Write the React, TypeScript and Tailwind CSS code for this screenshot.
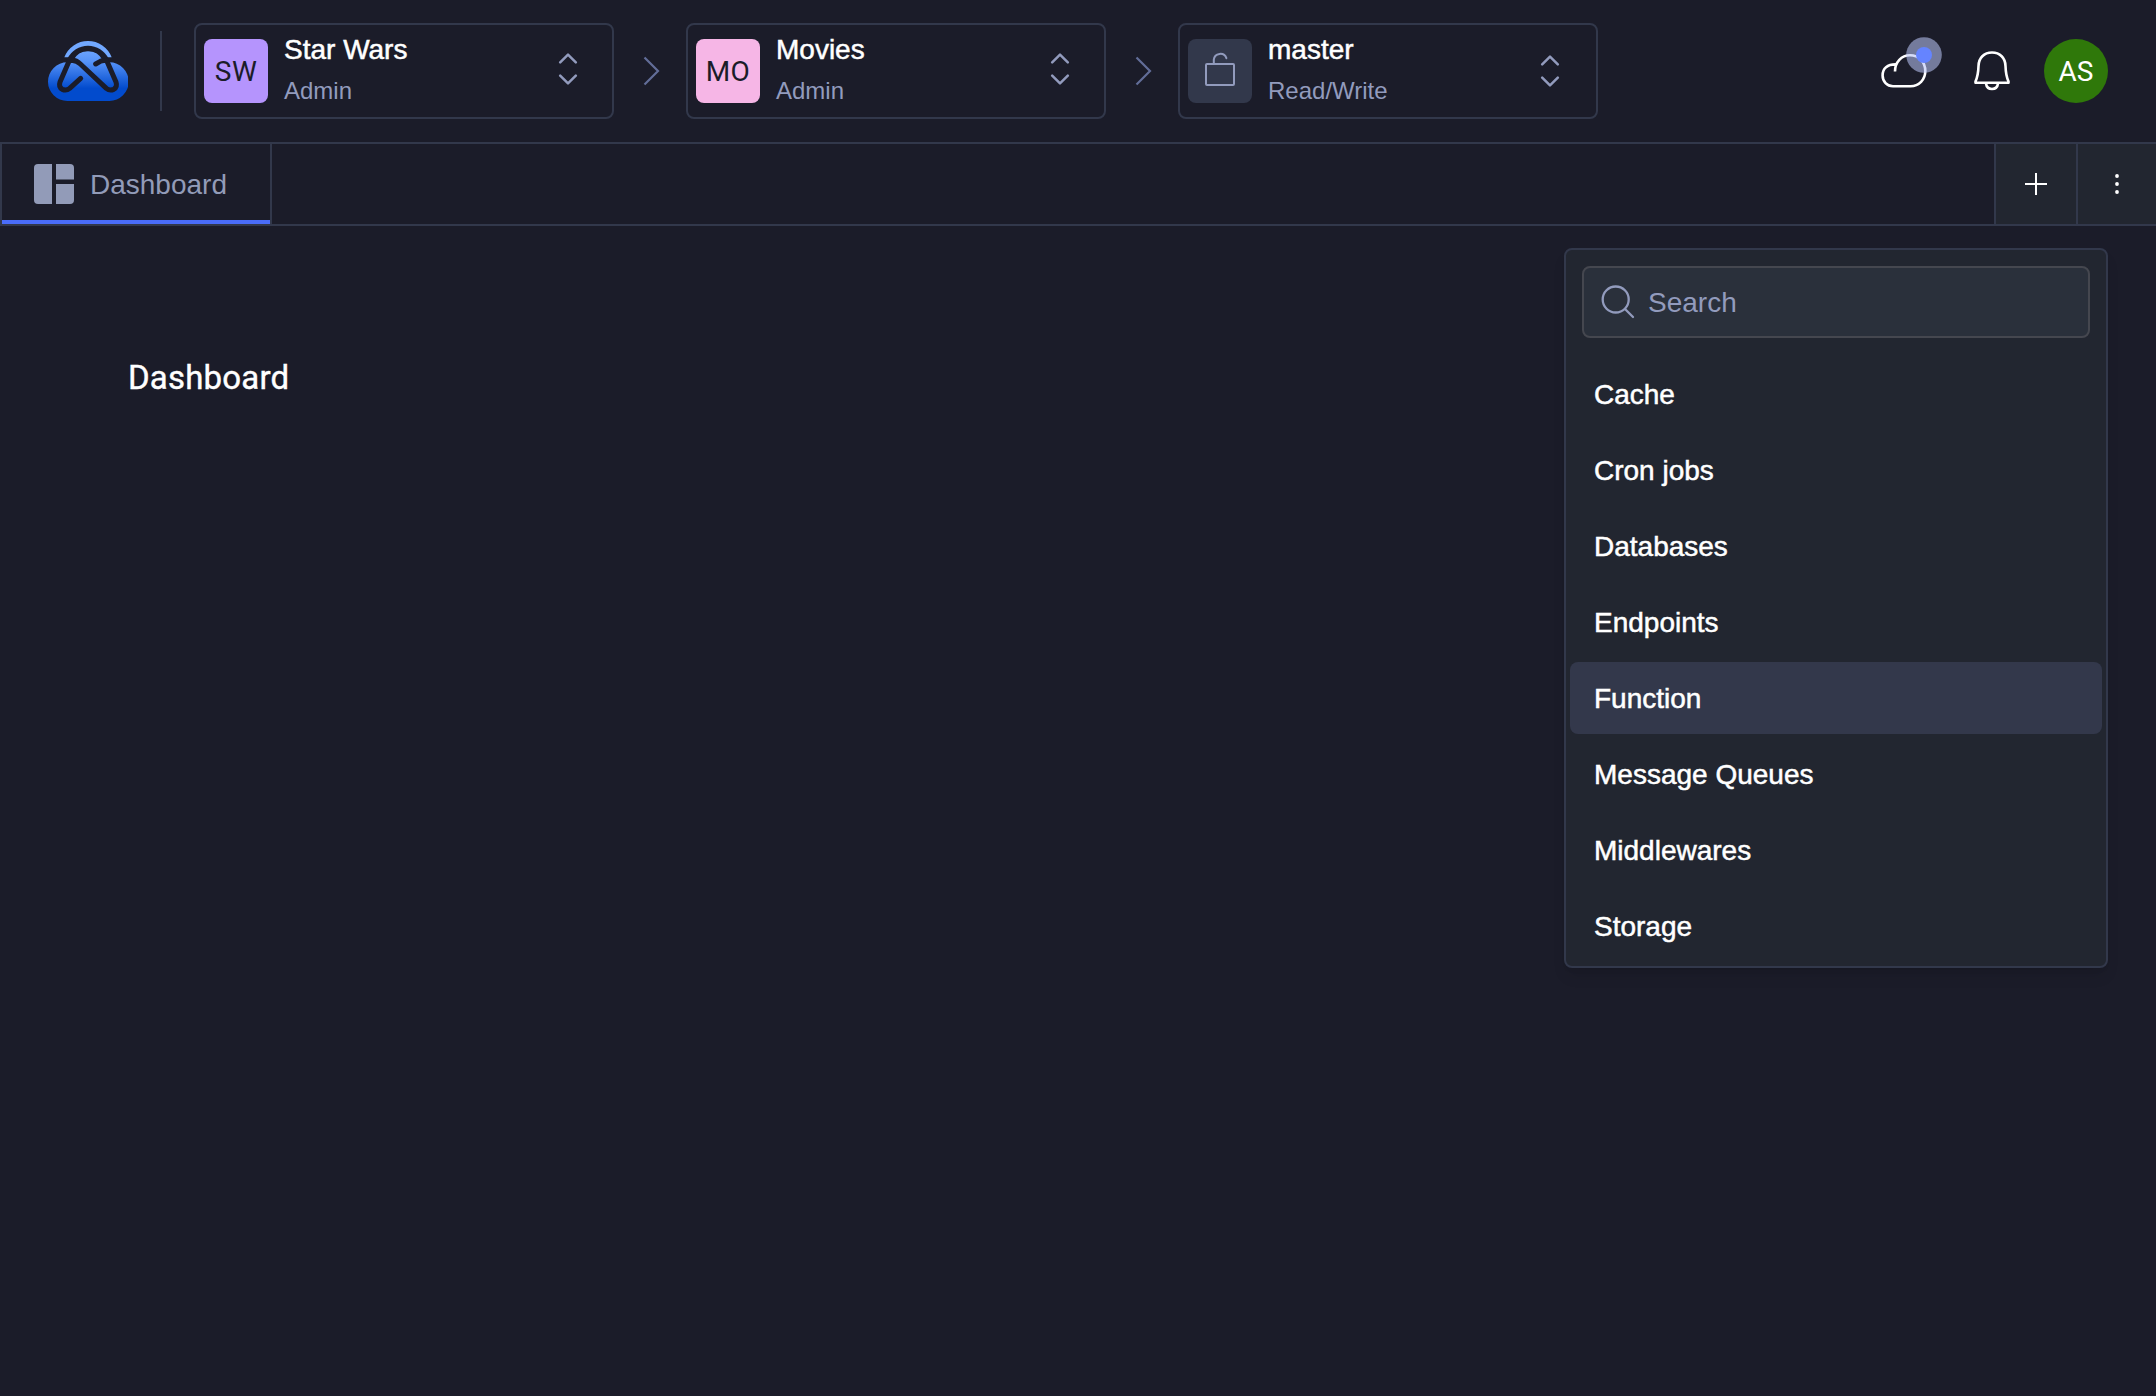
import React from "react";

const Logo = () => (
  <svg viewBox="54 48 240 180" className="-mt-px h-[60px] w-20 shrink-0" fill="none">
    <defs>
      <linearGradient id="cloud" x1="0" y1="62" x2="0" y2="190" gradientUnits="userSpaceOnUse">
        <stop offset="0" stopColor="#77acff" />
        <stop offset="0.38" stopColor="#5592f8" />
        <stop offset="1" stopColor="#024bcd" />
      </linearGradient>
    </defs>
    <path d="M103 97A76 76 0 0 1 245 97H228A62 62 0 0 0 120 97Z" fill="#71a8ff" />
    <path
      d="M130 106A49 49 0 0 1 218 106L222 112H238A58 58 0 0 1 238 228H112A58 58 0 0 1 112 112H126Z"
      fill="url(#cloud)"
    />
    <g stroke="#1b1c29" strokeWidth="15" strokeLinecap="round" strokeLinejoin="round">
      <path d="M152 160L119 190Q109 198 97 193Q85 186 90 171L119 104A61 61 0 0 1 229 104L258 171Q263 186 251 193Q239 198 229 190L151 117Q136 103 121 107" />
      <path d="M197 117L211 109Q219 105 228 107" />
    </g>
  </svg>
);

const Chevron = () => (
  <svg viewBox="0 0 18 30" className="h-[30px] w-[18px] shrink-0" fill="none" stroke="#626d98" strokeWidth="2.200">
    <path d="M1.500 1.500L15 15L1.500 28.500" />
  </svg>
);

const UpDown = ({ shift }: { shift?: boolean }) => (
  <svg
    viewBox="0 0 20 32"
    className={shift ? "mr-9 h-8 w-5 shrink-0" : "-mt-1 mr-[34px] h-8 w-5 shrink-0"}
    fill="none"
    stroke="#929bbd"
    strokeWidth="2.500"
    strokeLinecap="round"
    strokeLinejoin="round"
  >
    <path d="M2.200 9.300L10 1.600L17.800 9.300M2.200 22.700L10 30.400L17.800 22.700" />
  </svg>
);

const Picker = ({
  badge,
  badgeClass,
  title,
  role,
  shift,
}: {
  badge: React.ReactNode;
  badgeClass: string;
  title: string;
  role: string;
  shift?: boolean;
}) => (
  <button className="flex h-24 w-[420px] shrink-0 items-center rounded-lg border-2 border-[#32384b] pl-2 text-left">
    <span
      className={
        "flex size-16 shrink-0 items-center justify-center rounded-lg font-['Roboto',sans-serif] text-[28px] tracking-[0.5px] text-[#1b1c29] " +
        badgeClass
      }
    >
      {badge}
    </span>
    <span className="ml-4 flex flex-1 flex-col">
      <span className="-mt-px mb-px text-[28px] leading-10 text-white [-webkit-text-stroke:0.5px_white]">{title}</span>
      <span className="text-2xl leading-10 text-[#929bbd]">{role}</span>
    </span>
    <UpDown shift={shift} />
  </button>
);

const LockIcon = () => (
  <svg viewBox="0 0 32 36" className="mb-1 h-9 w-8" fill="none" stroke="#929bbd" strokeWidth="2" strokeLinejoin="round">
    <rect x="2" y="13" width="28" height="21" rx="1" />
    <path d="M9.800 13V8.700A6.500 6.500 0 0 1 22.400 7.200" strokeLinecap="round" />
  </svg>
);

const CloudIcon = () => (
  <svg viewBox="1880 36 62 54" className="h-[54px] w-[62px]" fill="none">
    <path
      d="M1895 71.500C1895 62 1901.500 55.300 1910 55.300C1919 55.300 1925.300 62.500 1925.300 71C1925.300 79.500 1919 86.200 1910.500 86.200H1893C1887 86.200 1882.600 81.500 1882.600 75.500C1882.600 68.500 1887.500 64.400 1895.500 64.400"
      stroke="white"
      strokeWidth="2.600"
    />
    <circle cx="1924" cy="55" r="17.800" fill="#b9c4f5" fillOpacity="0.57" />
    <circle cx="1924" cy="55" r="8" fill="#6584ff" />
  </svg>
);

const BellIcon = () => (
  <svg viewBox="1973 50 38 42" className="h-[42px] w-[38px]" fill="none" stroke="white" strokeWidth="2.600" strokeLinejoin="round">
    <path d="M1992 52.500C1984 52.500 1978.700 58 1978.500 66C1978.300 73 1977.500 77 1975.500 81.500V82.700H2008.500V81.500C2006.500 77 2005.700 73 2005.500 66C2005.300 58 2000 52.500 1992 52.500Z" />
    <path d="M1986 83.500C1986.500 87 1988.800 89 1992 89C1995.200 89 1997.500 87 1998 83.500" />
  </svg>
);

const items = ["Cache", "Cron jobs", "Databases", "Endpoints", "Function", "Message Queues", "Middlewares", "Storage"];

export default function App() {
  return (
    <div className="relative flex h-[1396px] w-[2156px] flex-col overflow-hidden bg-[#1b1c29] font-['Liberation_Sans',Arial,sans-serif]">
      <header className="flex h-[142px] shrink-0 items-center pl-12 pr-12">
        <Logo />
        <div className="ml-8 mr-8 h-20 w-0.5 bg-[#32384b]" />
        <Picker badge={<span className="pt-0.5">SW</span>} badgeClass="bg-[#b594fd]" title="Star Wars" role="Admin" />
        <div className="flex w-[72px] items-center justify-center pl-1">
          <Chevron />
        </div>
        <Picker badge={<span className="pt-0.5">MO</span>} badgeClass="bg-[#f6b6e6]" title="Movies" role="Admin" />
        <div className="flex w-[72px] items-center justify-center pl-1">
          <Chevron />
        </div>
        <Picker badge={<LockIcon />} badgeClass="bg-[#32384b]" title="master" role="Read/Write" shift />
        <div className="ml-auto flex items-center">
          <div className="mr-[31px] -mt-4">
            <CloudIcon />
          </div>
          <div className="mr-[33px]">
            <BellIcon />
          </div>
          <div className="flex size-16 items-center justify-center rounded-full bg-[#2f780a] pt-px font-['Roboto',sans-serif] text-[28px] text-white">
            AS
          </div>
        </div>
      </header>

      <nav className="flex h-[84px] shrink-0 border-y-2 border-[#32384b]">
        <div className="flex w-[272px] items-center border-x-2 border-[#32384b]">
          <div className="flex h-full w-full items-center border-b-4 border-[#4a6cf9] pl-8 pt-1">
            <svg viewBox="0 0 40 40" className="size-10" fill="#929bb8">
              <path d="M4 0H18V40H4A4 4 0 0 1 0 36V4A4 4 0 0 1 4 0Z" />
              <path d="M22 0H36A4 4 0 0 1 40 4V15.500H22Z" />
              <path d="M22 20H40V36A4 4 0 0 1 36 40H22Z" />
            </svg>
            <span className="ml-4 pt-0.5 text-[28px] leading-10 text-[#929bb8]">Dashboard</span>
          </div>
        </div>
        <button className="ml-auto flex w-[82px] items-center justify-center border-l-2 border-[#32384b] bg-[#222630]">
          <svg viewBox="0 0 22 22" className="size-[22px]" stroke="white" strokeWidth="2">
            <path d="M11 0V22M0 11H22" />
          </svg>
        </button>
        <button className="flex w-20 items-center justify-center border-l-2 border-[#32384b] bg-[#222630]">
          <svg viewBox="0 0 4 20" className="h-5 w-1" fill="white">
            <circle cx="2" cy="2" r="1.900" />
            <circle cx="2" cy="10" r="1.900" />
            <circle cx="2" cy="18" r="1.900" />
          </svg>
        </button>
      </nav>

      <main className="pl-32 pt-[132px]">
        <h1 className="font-['Roboto',sans-serif] text-[33px] leading-10 tracking-[0.2px] text-white [-webkit-text-stroke:0.4px_white]">
          Dashboard
        </h1>
      </main>

      <div className="absolute right-12 top-[248px] h-[720px] w-[544px] rounded-lg border-2 border-[#32384b] bg-[#222630] px-1 pt-4 shadow-lg">
        <div className="mx-3 flex h-[72px] items-center rounded-lg border-2 border-[#45474f] bg-[#2a303b] pl-[17px]">
          <svg viewBox="0 0 34 34" className="size-[34px]" fill="none" stroke="#929bbd" strokeWidth="2.300" strokeLinecap="round">
            <circle cx="14.700" cy="14.500" r="13" />
            <path d="M24 24L32 32" />
          </svg>
          <span className="ml-[13px] pt-0.5 text-[28px] leading-10 text-[#929bbd]">Search</span>
        </div>
        <ul className="mt-5 flex flex-col gap-1">
          {items.map((item) => (
            <li
              key={item}
              className={
                item === "Function"
                  ? "flex h-[72px] items-center rounded-lg bg-[#33384b] pl-6"
                  : "flex h-[72px] items-center rounded-lg pl-6"
              }
            >
              <span className="pt-0.5 text-[28px] leading-10 text-white [-webkit-text-stroke:0.5px_white]">{item}</span>
            </li>
          ))}
        </ul>
      </div>
    </div>
  );
}
